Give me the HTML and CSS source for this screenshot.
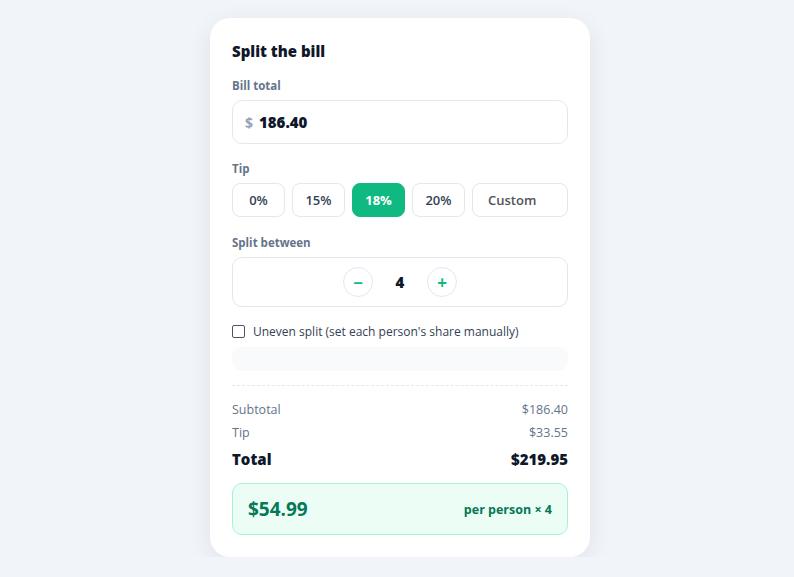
FILE: index.html
```html
<!DOCTYPE html>
<html lang="en">
  <head>
    <meta charset="UTF-8" />
    <meta name="viewport" content="width=device-width, initial-scale=1.0" />
    <title>Split the bill</title>
    <link rel="stylesheet" href="styles.css">
  </head>
  <body>
    <div class="card">
      <h1 class="title">Split the bill</h1>

      <label class="label">Bill total</label>
      <div class="amount">
        <span class="currency">$</span>
        <span class="amount-value">186.40</span>
      </div>

      <label class="label">Tip</label>
      <div class="tips">
        <button class="tip">0%</button>
        <button class="tip">15%</button>
        <button class="tip active">18%</button>
        <button class="tip">20%</button>
        <div class="tip custom">Custom</div>
      </div>

      <label class="label">Split between</label>
      <div class="stepper">
        <button class="step">&minus;</button>
        <span class="count">4</span>
        <button class="step">+</button>
      </div>

      <div class="uneven">
        <span class="checkbox"></span>
        <span>Uneven split (set each person's share manually)</span>
      </div>
      <div class="shares"></div>

      <div class="summary">
        <div class="row"><span>Subtotal</span><span>$186.40</span></div>
        <div class="row"><span>Tip</span><span>$33.55</span></div>
        <div class="row total"><span>Total</span><span>$219.95</span></div>
      </div>

      <div class="result">
        <span class="per">$54.99</span>
        <span class="per-label">per person &times; 4</span>
      </div>
    </div>
  </body>
</html>
```

FILE: styles.css
```css
* {
  box-sizing: border-box;
  font-family: "Open Sans", "Noto Sans", sans-serif;
}

body {
  margin: 0;
  background-color: #f1f4f8;
  display: flex;
  justify-content: center;
  padding: 18px 0 0 6px;
}

/* 카드 */
.card {
  width: 380px;
  background: white;
  border-radius: 20px;
  padding: 22px 22px 22px 22px;
  box-shadow: 0 6px 24px rgba(15, 23, 42, 0.08);
  display: flex;
  flex-direction: column;
}

.title {
  margin: 0 0 16px 0;
  font-size: 15px;
  font-weight: 800;
  color: #0f172a;
  line-height: 22px;
}

.label {
  font-size: 11.5px;
  font-weight: 700;
  color: #64748b;
  line-height: 16px;
  margin-bottom: 6px;
}

.amount {
  height: 44px;
  border: 1px solid #e2e8f0;
  border-radius: 10px;
  display: flex;
  align-items: center;
  padding: 0 12px;
  gap: 6px;
  margin-bottom: 17px;
}
.currency {
  color: #94a3b8;
  font-weight: 700;
  font-size: 14px;
}
.amount-value {
  color: #0f172a;
  font-weight: 800;
  font-size: 15px;
}

/* 팁 버튼 */
.tips {
  display: flex;
  gap: 7px;
  margin-bottom: 18px;
}
.tip {
  width: 53px;
  height: 34px;
  border: 1px solid #e2e8f0;
  border-radius: 8px;
  background: white;
  color: #334155;
  font-size: 13px;
  font-weight: 600;
  display: flex;
  align-items: center;
  justify-content: center;
  padding: 0;
}
.tip.active {
  background: #10b981;
  border-color: #10b981;
  color: white;
  font-weight: 700;
}
.tip.custom {
  flex: 1;
  justify-content: flex-start;
  padding-left: 15px;
  color: #52525b;
}

/* 인원 */
.stepper {
  height: 50px;
  border: 1px solid #e2e8f0;
  border-radius: 10px;
  display: flex;
  align-items: center;
  justify-content: center;
  gap: 14px;
  margin-bottom: 16px;
}
.step {
  width: 30px;
  height: 30px;
  border-radius: 50%;
  border: 1px solid #e2e8f0;
  background: white;
  color: #10b981;
  font-size: 17px;
  font-weight: 700;
  display: flex;
  align-items: center;
  justify-content: center;
  padding: 0;
  line-height: 1;
}
.count {
  width: 26px;
  text-align: center;
  font-size: 15px;
  font-weight: 800;
  color: #0f172a;
}

.uneven {
  display: flex;
  align-items: center;
  gap: 8px;
  font-size: 12px;
  color: #334155;
  margin-bottom: 7px;
}
.checkbox {
  width: 13px;
  height: 13px;
  border: 1px solid #4b5563;
  border-radius: 2px;
}

.shares {
  height: 24px;
  background: #f8fafc;
  border-radius: 10px;
  margin-bottom: 14px;
}

.summary {
  border-top: 1px dashed #e2e8f0;
  padding-top: 12px;
  margin-bottom: 12px;
}
.row {
  display: flex;
  justify-content: space-between;
  font-size: 12.5px;
  color: #64748b;
  line-height: 23px;
}
.row.total {
  margin-top: 4px;
  font-size: 15px;
  font-weight: 800;
  color: #0f172a;
}

.result {
  height: 52px;
  background: #ecfdf5;
  border: 1px solid #a7f3d0;
  border-radius: 10px;
  display: flex;
  align-items: center;
  justify-content: space-between;
  padding: 0 15px;
}
.per {
  font-size: 19px;
  font-weight: 700;
  color: #047857;
}
.per-label {
  font-size: 12.5px;
  font-weight: 700;
  color: #047857;
}
```
